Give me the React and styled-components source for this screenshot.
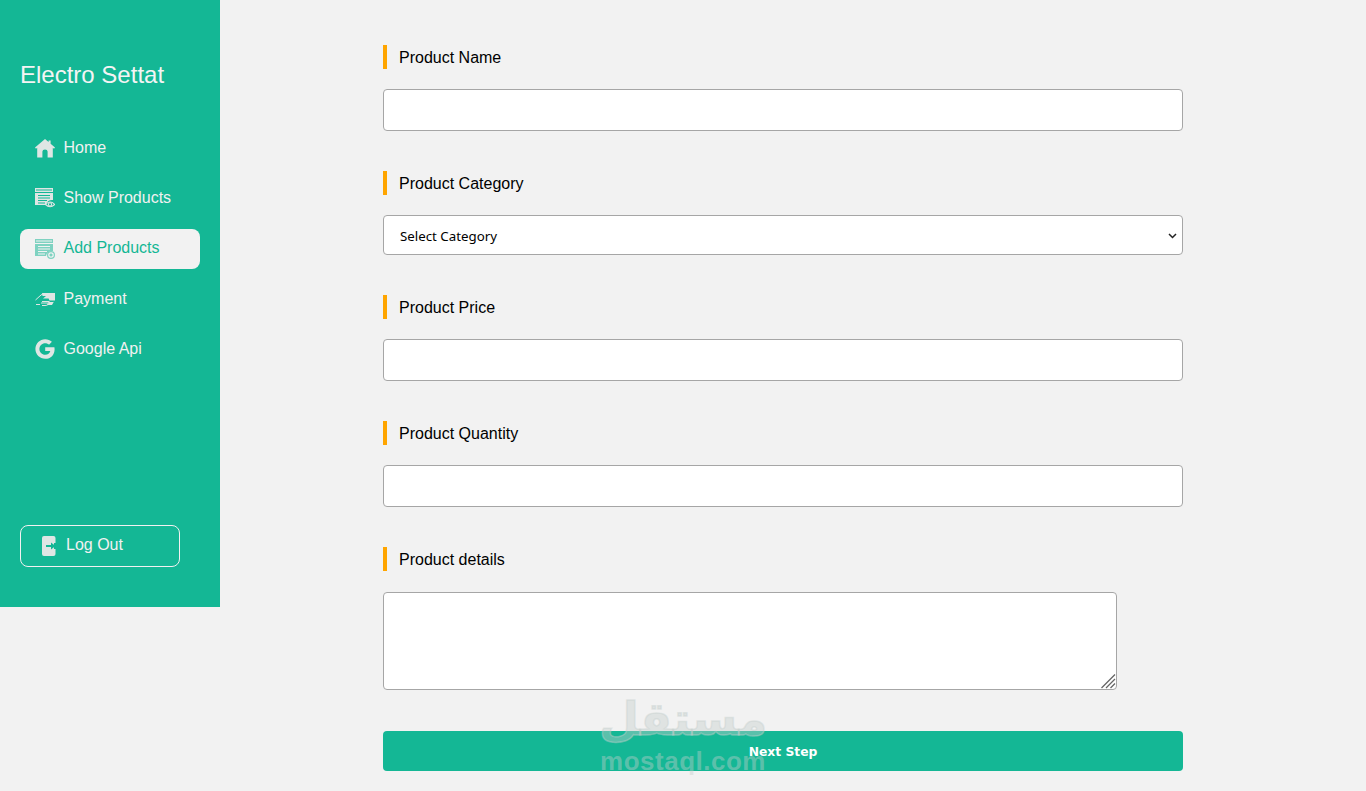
import React from "react";
import styled, { createGlobalStyle } from "styled-components";

const GlobalStyle = createGlobalStyle`
  html, body {
    margin: 0;
    padding: 0;
    background: #f2f2f2;
    font-family: "Liberation Sans", Arial, sans-serif;
  }
  * { box-sizing: border-box; }
`;

const Page = styled.div`
  display: flex;
  align-items: flex-start;
  min-height: 791px;
  position: relative;
  overflow: hidden;
`;

const Sidebar = styled.aside`
  width: 220px;
  height: 607px;
  flex-shrink: 0;
  display: flex;
  flex-direction: column;
  padding: 61px 20px 40px;
  background: #14b795;
  color: #fff;
`;

const Brand = styled.h1`
  margin: 0 0 38px;
  font-size: 24px;
  line-height: 28px;
  font-weight: 400;
  color: #f4f4f4;
`;

const Nav = styled.nav`
  display: flex;
  flex-direction: column;
  gap: 10px;
`;

const NavItem = styled.a`
  display: flex;
  align-items: center;
  gap: 8.5px;
  width: 180px;
  height: 40px;
  padding: ${(p) => (p.$active ? "0 0 2px 15px" : "2px 0 0 15px")};
  margin: ${(p) => (p.$active ? "2px 0 -1px" : "0")};
  border-radius: 8px;
  font-size: 16px;
  background: ${(p) => (p.$active ? "#f2f2f2" : "transparent")};
  color: ${(p) => (p.$active ? "#14b795" : "#f1f1f1")};
`;

const IconBox = styled.svg`
  width: 20px;
  height: 20px;
  flex-shrink: 0;
  position: relative;
  top: ${(p) => (p.$active ? "1px" : "0")};
`;

const LogOut = styled.a`
  display: flex;
  align-items: center;
  gap: 8px;
  width: 160px;
  height: 42px;
  margin-top: auto;
  padding: 0 0 2px 20px;
  border: 1px solid #f1f1f1;
  border-radius: 8px;
  font-size: 16px;
  color: #f1f1f1;
`;

const LogOutIcon = styled.svg`
  width: 17px;
  height: 20px;
  flex-shrink: 0;
  position: relative;
  top: 1px;
`;

const Main = styled.main`
  padding: 45px 0 20px 163px;
`;

const Form = styled.form`
  width: 800px;
  display: flex;
  flex-direction: column;
`;

const Label = styled.label`
  display: block;
  height: 24px;
  margin-bottom: 20px;
  padding: 1px 0 0 12px;
  border-left: 4px solid #ffa500;
  font-size: 16px;
  line-height: 24px;
  color: #000;
`;

const TextInput = styled.input`
  display: block;
  width: 100%;
  height: 42px;
  margin-bottom: 40px;
  border: 1px solid #a6a6a6;
  border-radius: 4px;
  background: #fff;
`;

const SelectBox = styled.select`
  display: block;
  width: 100%;
  height: 40px;
  margin-bottom: 40px;
  padding: 1px 0 0 16px;
  border: 1px solid #a6a6a6;
  border-radius: 4px;
  appearance: none;
  background: #fff url("data:image/svg+xml,%3Csvg xmlns='http://www.w3.org/2000/svg' width='9' height='6'%3E%3Cpath d='M1 1l3.5 3.5L8 1' fill='none' stroke='%23222' stroke-width='1.5'/%3E%3C/svg%3E") no-repeat right 5px top 17px;
  color: #000;
  font-family: "Noto Sans", Verdana, sans-serif;
  font-size: 13.3px;
`;

const AreaWrap = styled.div`
  position: relative;
  width: 734px;
  height: 98px;
  margin: 1px 0 41px;
`;

const TextArea = styled.textarea`
  display: block;
  width: 100%;
  height: 100%;
  border: 1px solid #a6a6a6;
  border-radius: 4px;
  background: #fff;
  resize: none;
`;

const ResizeGrip = styled.svg`
  position: absolute;
  right: 1px;
  bottom: 1px;
  width: 16px;
  height: 16px;
  pointer-events: none;
`;

const Submit = styled.button`
  display: block;
  width: 100%;
  height: 40px;
  padding: 2px 0 0 0;
  border: 0;
  border-radius: 4px;
  background: #14b795;
  color: #fff;
  font-family: "DejaVu Sans", Verdana, sans-serif;
  font-size: 12.3px;
  font-weight: 700;
`;

const Watermark = styled.div`
  position: absolute;
  left: 596px;
  top: 690px;
  width: 174px;
  display: flex;
  flex-direction: column;
  align-items: center;
  pointer-events: none;
  color: rgba(197, 207, 205, 0.41);
  font-weight: 700;
`;

const WatermarkArabic = styled.div`
  font-family: "DejaVu Sans", sans-serif;
  font-size: 46px;
  line-height: 58px;
  -webkit-text-stroke: 1.5px rgba(197, 207, 205, 0.41);
`;

const WatermarkLatin = styled.div`
  font-family: "Liberation Sans", Arial, sans-serif;
  font-size: 26px;
  line-height: 27px;
  letter-spacing: 0.5px;
`;

const HomeIcon = () => (
  <IconBox viewBox="0 0 20 20">
    <path
      fill="#dfe6e4"
      d="M10 1 L13.6 4.1 V2.6 H15.6 V5.8 L20 9.6 L19 10.8 L17.8 9.8 V19.5 H12.6 V13.5 Q12.6 11.5 10 11.5 Q7.4 11.5 7.4 13.5 V19.5 H2.2 V9.8 L1 10.8 L0 9.6 Z"
    />
  </IconBox>
);

const ListIcon = ({ color, stroke, active, badge }) => (
  <IconBox viewBox="0 0 20 20" $active={active}>
    <path fill={color} d="M0 0 H18 V4 H0 Z" />
    <path fill={color} d="M0 5 H18 V12 A6 6 0 0 0 11 17 H0 Z" />
    <path
      stroke={stroke}
      strokeWidth="1"
      fill="none"
      d="M1 2 H17 M3 7.5 H15 M3 10 H15 M3 12.5 H12 M3 15 H10"
    />
    {badge === "eye" ? (
      <g fill="none" stroke={color} strokeWidth="1.1">
        <path d="M10.5 16.5 Q15 11.5 19.8 16.5 Q15 21 10.5 16.5 Z" />
        <circle cx="15" cy="16.4" r="1.6" />
      </g>
    ) : (
      <g fill="none" stroke={color}>
        <circle cx="16" cy="16" r="3.4" strokeWidth="1.2" />
        <circle cx="16" cy="16" r="1.3" fill={color} strokeWidth="0.5" />
      </g>
    )}
  </IconBox>
);

const PaymentIcon = () => (
  <IconBox viewBox="0 0 20 20">
    <path fill="#dfe6e4" d="M7 4 H20 V11.5 H14.5 L13.6 9.5 H8 L11 7 H7.5 Z" />
    <path
      fill="none"
      stroke="#dfe6e4"
      strokeWidth="1"
      d="M0.5 11 L6 6 Q7 5 9 5 M1 15.5 H5 M6 14 H12 Q14 14 13 15.5 Q12 16.5 10 16.5 H7"
    />
    <path fill="#dfe6e4" d="M7 12 H14 L15 13 H19 V12.4 L17 16 H12 Q15 13.6 12 13 H7 Z" />
  </IconBox>
);

const GoogleIcon = () => (
  <IconBox viewBox="0 0 20 20">
    <path
      fill="#dfe6e4"
      d="M10.2 8.2 V12 H15.3 C14.8 14.3 12.9 15.8 10.2 15.8 C7 15.8 4.4 13.2 4.4 10 C4.4 6.8 7 4.2 10.2 4.2 C11.7 4.2 13 4.7 14 5.7 L16.9 2.8 C15.1 1.1 12.8 0.2 10.2 0.2 C4.8 0.2 0.4 4.6 0.4 10 C0.4 15.4 4.8 19.8 10.2 19.8 C15.9 19.8 19.6 15.8 19.6 10.2 C19.6 9.5 19.5 8.8 19.4 8.2 Z"
    />
  </IconBox>
);

const ExitIcon = () => (
  <LogOutIcon viewBox="0 0 17 20">
    <path
      fill="#dfe6e4"
      d="M3 0 H12.5 Q14.5 0 14.5 2 V7 L13 7 V13 L14.5 13 V18 Q14.5 20 12.5 20 H3 Q1 20 1 18 V2 Q1 0 3 0 Z"
    />
    <path fill="#14b795" d="M5 9 H10 V6.5 L14.5 10 L10 13.5 V11 H5 Z" />
  </LogOutIcon>
);

const fields = [
  { label: "Product Name", kind: "input" },
  { label: "Product Category", kind: "select" },
  { label: "Product Price", kind: "input" },
  { label: "Product Quantity", kind: "input" },
  { label: "Product details", kind: "area" },
];

const App = () => {
  return (
    <Page>
      <GlobalStyle />
      <Sidebar>
        <Brand>Electro Settat</Brand>
        <Nav>
          <NavItem>
            <HomeIcon />
            Home
          </NavItem>
          <NavItem>
            <ListIcon color="#dfe6e4" stroke="#14b795" badge="eye" />
            Show Products
          </NavItem>
          <NavItem $active>
            <ListIcon color="#7fd2c1" stroke="#f2f2f2" active />
            Add Products
          </NavItem>
          <NavItem>
            <PaymentIcon />
            Payment
          </NavItem>
          <NavItem>
            <GoogleIcon />
            Google Api
          </NavItem>
        </Nav>
        <LogOut>
          <ExitIcon />
          Log Out
        </LogOut>
      </Sidebar>
      <Main>
        <Form>
          {fields.map((f) => (
            <React.Fragment key={f.label}>
              <Label>{f.label}</Label>
              {f.kind === "input" && <TextInput type="text" />}
              {f.kind === "select" && (
                <SelectBox defaultValue="">
                  <option value="">Select Category</option>
                </SelectBox>
              )}
              {f.kind === "area" && (
                <AreaWrap>
                  <TextArea />
                  <ResizeGrip viewBox="0 0 16 16">
                    <path
                      stroke="#666"
                      strokeWidth="1.3"
                      fill="none"
                      d="M1.5 15 L15 1.5 M6 15 L15 6 M10.5 15 L15 10.5"
                    />
                  </ResizeGrip>
                </AreaWrap>
              )}
            </React.Fragment>
          ))}
          <Submit type="button">Next Step</Submit>
        </Form>
      </Main>
      <Watermark>
        <WatermarkArabic>مستقل</WatermarkArabic>
        <WatermarkLatin>mostaql.com</WatermarkLatin>
      </Watermark>
    </Page>
  );
};

export default App;
